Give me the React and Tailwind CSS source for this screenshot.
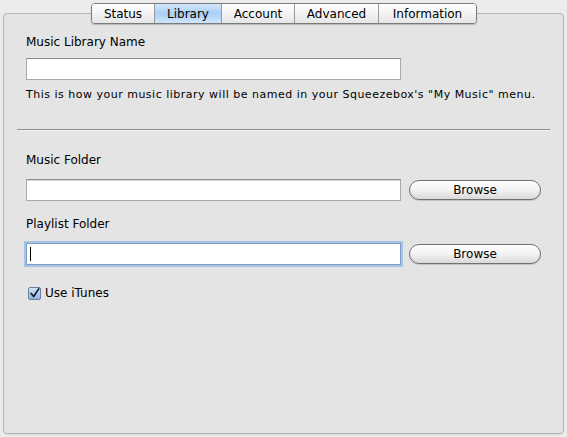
import { useState } from "react";

const TABS = ["Status", "Library", "Account", "Advanced", "Information"];
const TAB_WIDTHS = ["w-[62px]", "w-[67px]", "w-[73px]", "w-[84px]", "w-[98px]"];

const FolderRow = ({ focused }) => (
  <div className="flex items-center gap-2">
    <div className="relative">
      <input
        type="text"
        className={`block w-[375px] h-[22px] bg-white px-1 text-[12px] outline-none ${
          focused
            ? "border border-[#7c9dc4] shadow-[0_0_0_2px_#a8c4e4]"
            : "border border-[#a9a9a9] border-t-[#8c8c8c] shadow-[inset_0_1px_0_#d8d8d8]"
        }`}
      />
      {/* blinking caret */}
      {focused && <span className="absolute left-[4px] top-[4px] w-px h-[14px] bg-black" />}
    </div>
    <button className="w-[134px] h-[20px] rounded-full border border-[#707070] bg-gradient-to-b from-white via-[#f2f2f2] to-[#d9d9d9] text-[12px] text-black leading-none shadow-[0_1px_1px_rgba(0,0,0,0.15)]">
      Browse
    </button>
  </div>
);

export default function App() {
  const [useItunes, setUseItunes] = useState(true);

  return (
    <div className="w-[567px] h-[437px] bg-[#ececec] relative font-['DejaVu_Sans',sans-serif] text-black">
      {/* Panel */}
      <div className="absolute left-[3px] top-[13px] w-[561px] h-[421px] rounded-[4px] border border-[#b5b5b5] bg-[#e4e4e4] shadow-[0_1px_1px_rgba(0,0,0,0.08)]">
        <div className="pt-[20px] px-[22px]">
          <div className="text-[12px] leading-[16px]">Music Library Name</div>
          <input
            type="text"
            className="mt-[8px] w-[375px] h-[22px] bg-white border border-[#a9a9a9] border-t-[#8c8c8c] outline-none block"
          />
          <p className="mt-[8px] text-[11px] tracking-[0.5px] leading-[14px] whitespace-nowrap">
            This is how your music library will be named in your Squeezebox's "My Music" menu.
          </p>
        </div>

        <div className="mt-[27px] mx-[13px] h-px bg-[#8e8e8e] border-b border-[#f2f2f2] box-content" />

        <div className="pt-[21px] px-[22px]">
          <div className="text-[12px] leading-[16px]">Music Folder</div>
          <div className="mt-[11px]">
            <FolderRow />
          </div>
          <div className="mt-[15px] text-[12px] leading-[16px]">Playlist Folder</div>
          <div className="mt-[11px]">
            <FolderRow focused />
          </div>

          <label className="mt-[19px] flex items-center gap-[4px] text-[12px] cursor-default">
            <span
              onClick={() => setUseItunes(!useItunes)}
              className="w-[13px] h-[13px] ml-[2px] border border-[#6a7f99] rounded-[2px] bg-gradient-to-b from-[#d3e4f6] to-[#8fb3dc] flex items-center justify-center"
            >
              {useItunes && (
                <svg width="13" height="13" viewBox="0 0 13 13">
                  <path d="M2.5 6.5 L5.5 10 L11.5 1" fill="none" stroke="#0c1a33" strokeWidth="2" strokeLinecap="round" strokeLinejoin="round" />
                </svg>
              )}
            </span>
            Use iTunes
          </label>
        </div>
      </div>

      {/* Tabs */}
      <div className="absolute left-[91px] top-[3px] flex h-[21px] rounded-[4px] border border-[#7a7a7a] overflow-hidden shadow-[0_1px_1px_rgba(0,0,0,0.2)]">
        {TABS.map((t, i) => (
          <div
            key={t}
            className={`${TAB_WIDTHS[i]} flex items-center justify-center text-[12px] ${
              i > 0 ? "border-l border-[#9a9a9a]" : ""
            } ${
              t === "Library"
                ? "bg-gradient-to-b from-[#d3e7fb] via-[#a9cff4] to-[#cfe6fb]"
                : "bg-gradient-to-b from-white via-[#f3f3f3] to-[#e6e6e6]"
            }`}
          >
            {t}
          </div>
        ))}
      </div>
    </div>
  );
}
